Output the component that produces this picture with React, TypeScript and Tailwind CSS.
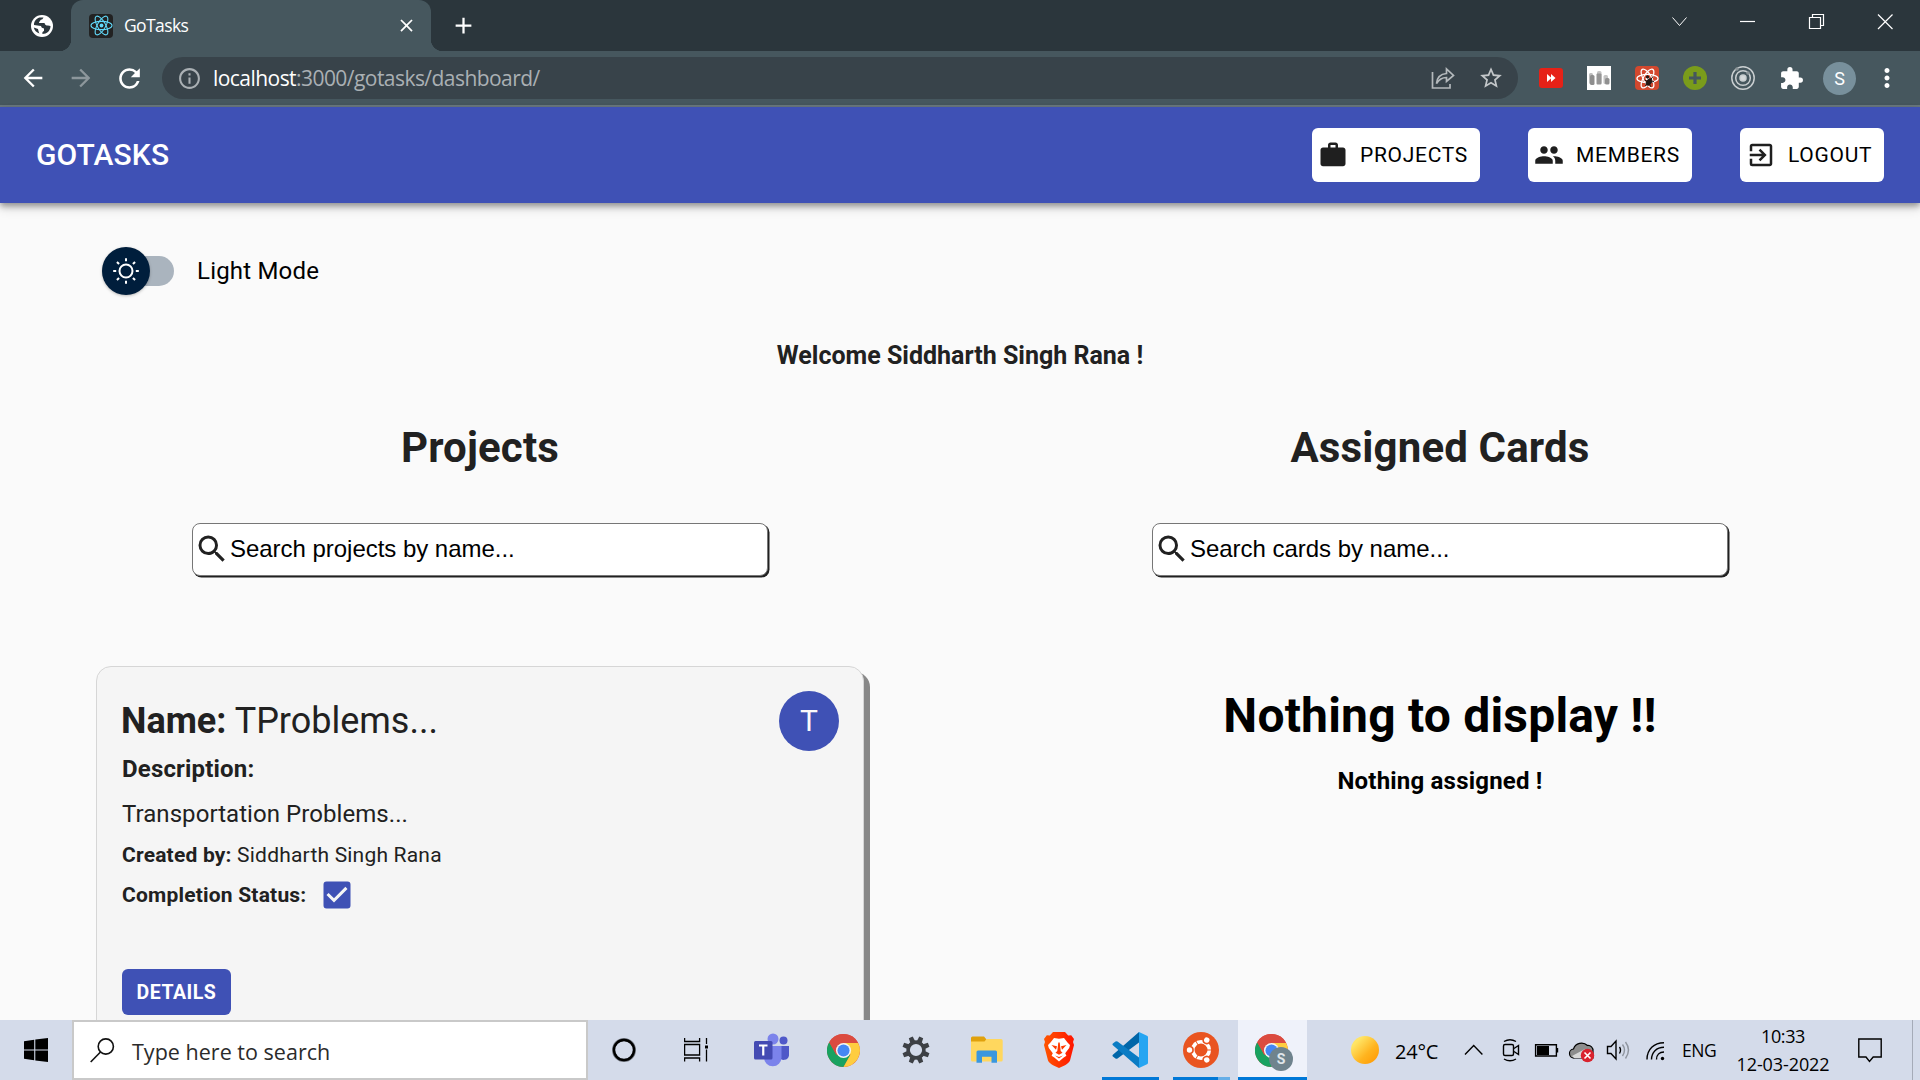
import React from "react";
import {
  MdWork,
  MdPeople,
  MdExitToApp,
  MdSearch,
  MdCheckBox,
  MdExtension,
  MdStarBorder,
  MdMoreVert,
  MdArrowBack,
  MdArrowForward,
  MdRefresh,
  MdInfoOutline,
  MdClose,
  MdAdd,
} from "react-icons/md";

const ui = "font-['Open_Sans',sans-serif]";

function Atom({ size, color, width = 1.3 }: { size: number; color: string; width?: number }) {
  return (
    <svg width={size} height={size} viewBox="-12 -12 24 24" fill="none" stroke={color} strokeWidth={width}>
      <ellipse rx="11" ry="4.3" />
      <ellipse rx="11" ry="4.3" transform="rotate(60)" />
      <ellipse rx="11" ry="4.3" transform="rotate(120)" />
      <circle r="2" fill={color} stroke="none" />
    </svg>
  );
}

function ChromeLogo({ size }: { size: number }) {
  return (
    <svg width={size} height={size} viewBox="0 0 48 48">
      <circle cx="24" cy="24" r="24" fill="#dd4f43" />
      <path d="M3.2 12 A24 24 0 0 0 24 48 L34.4 30 L13.6 30 Z" fill="#19a260" />
      <path d="M24 13 H45.3 A24 24 0 0 1 24 48 L34 30 Z" fill="#fecd40" />
      <path d="M3.2 12 L13.6 30 L24 13 H45.3 A24 24 0 0 0 3.2 12Z" fill="#db4b40" />
      <circle cx="24" cy="24" r="11" fill="#f4f4f4" />
      <circle cx="24" cy="24" r="8.8" fill="#4587f3" />
    </svg>
  );
}

function TabStrip() {
  return (
    <div className="flex h-[51px] bg-[#2b363c] text-white">
      <div className="flex w-[71px] items-center pl-[31px]">
        <svg width="22" height="22" viewBox="0 0 22 22">
          <circle cx="11" cy="11" r="11" fill="#fff" />
          <path
            d="M12.500 2.500c-1 1.500-1 2-3 2.500-.5 1.500-1.500 1.500-1.500 3h5.500c.5 2 1.500 2.500 3.500 2.500l2.500.5c0 4-2.500 6.500-5 7.500l-3 .5c-.5-1.500 0-2.500 1.500-3v-2.500c-2-.5-2.500-1-3-2.500L3 10c-.3-3 2-6.500 5.500-7.500zM2.800 12.500l4.200 1.500c.5 1.500.5 3 1.500 4.500-3-1-5.200-3-5.700-6z"
            fill="#2b363c"
          />
        </svg>
      </div>
      <div className="relative flex w-[360px] items-center rounded-t-xl bg-[#46575e] pl-[18px]">
        <div className="absolute bottom-0 -left-3 h-3 w-3 bg-[radial-gradient(circle_at_0_0,transparent_12px,#46575e_12.5px)]" />
        <div className="absolute -right-3 bottom-0 h-3 w-3 bg-[radial-gradient(circle_at_100%_0,transparent_12px,#46575e_12.5px)]" />
        <div className="flex h-6 w-6 items-center justify-center rounded-sm bg-[#222]">
          <Atom size={23} color="#61dafb" width={1.1} />
        </div>
        <span className={`ml-[11px] flex-1 text-[17.5px] tracking-[-0.6px] ${ui}`}>GoTasks</span>
        <MdClose size={21} className="mr-[14px]" />
      </div>
      <div className="flex flex-1 items-center pl-[19px]">
        <MdAdd size={27} />
      </div>
      <svg width="260" height="51" viewBox="1660 0 260 51" fill="none" stroke="#fff" strokeWidth="1.2">
        <path d="M1672.5 17.5l7 8 7-8" strokeWidth="1" />
        <path d="M1740 21.5h15" />
        <path d="M1809.5 17.5h11v11h-11zM1812.5 17v-2.5h11v11h-2.5" />
        <path d="M1878 14.5l14.5 14.5M1892.5 14.5l-14.5 14.5" />
      </svg>
    </div>
  );
}

function Toolbar() {
  return (
    <div className="flex h-14 items-center border-b-2 border-[#6a787e] bg-[#46575e] text-white">
      <div className="flex w-[162px] items-center pl-[19px]">
        <MdArrowBack size={28} />
        <MdArrowForward size={28} className="ml-5 text-[#8d979c]" />
        <MdRefresh size={31} className="ml-[19px]" />
      </div>
      <div className="flex h-[42px] w-[1356px] items-center rounded-full bg-[#38434a] pl-[15px] text-[#aab0b4]">
        <MdInfoOutline size={25} />
        <span className={`ml-[11px] flex-1 pt-px text-[21px] tracking-[-0.55px] whitespace-nowrap ${ui}`}>
          <span className="text-white">localhost</span>:3000/gotasks/dashboard/
        </span>
        <svg width="24" height="24" viewBox="0 0 24 24" fill="none" stroke="#b4b9bc" strokeWidth="1.7">
          <path d="M1.5 6v16h17.5v-4" />
          <path d="M5.500 17.500c.5-6 3.500-9.500 10-10V3l7 6.500-7 6v-4c-5 0-7.500 2-10 6Z" />
        </svg>
        <MdStarBorder size={26} className="mr-[14px] ml-[23px] text-[#c3c7c9]" />
      </div>
      <div className="flex flex-1 items-center pl-[21px]">
        <svg width="24" height="20" viewBox="0 0 24 20">
          <rect width="24" height="20" rx="3" fill="#e62117" />
          <path d="M8 6l4.500 4L8 14zM12 6l4.500 4-4.500 4z" fill="#fff" />
        </svg>
        <svg className="ml-6" width="24" height="24" viewBox="0 0 24 24">
          <rect width="24" height="24" fill="#fff" />
          <rect x="2" y="7" width="4" height="11" rx="1.5" fill="#bdbdbd" />
          <rect x="3" y="9" width="4.5" height="10" rx="1.5" fill="#8e8e8e" />
          <rect x="10" y="5" width="4.5" height="13" rx="1.5" fill="#c4c4c4" />
          <rect x="9.5" y="7.5" width="5" height="11" rx="1" fill="#969696" />
          <rect x="16.5" y="9" width="4.5" height="9" rx="1.5" fill="#c4c4c4" />
          <rect x="18" y="12" width="4.5" height="6.5" rx="1.5" fill="#909090" />
        </svg>
        <div className="relative ml-6 flex h-6 w-6 items-center justify-center rounded-sm bg-[#d3482e]">
          <Atom size={23} color="#fff" width={1.3} />
          <svg className="absolute inset-0" width="24" height="24" viewBox="0 0 24 24" stroke="#231815" fill="#231815" strokeWidth="1">
            <ellipse cx="14" cy="16" rx="2.2" ry="3.6" transform="rotate(35 14 16)" />
            <circle cx="12.5" cy="11" r="1.2" />
            <path d="M9.500 14l4 2M18 10.500l-3 4M10 20l4-3M19 15.500l-5 1M16 21l-2-4" />
          </svg>
        </div>
        <svg className="ml-6" width="24" height="24" viewBox="0 0 24 24">
          <circle cx="12" cy="12" r="12" fill="#7a9c1b" />
          <path d="M12 6v12M6 12h12" stroke="#45575d" strokeWidth="3.2" />
        </svg>
        <svg className="ml-6" width="24" height="24" viewBox="0 0 24 24" fill="none" stroke="#c9ced0" strokeWidth="1.5">
          <circle cx="12" cy="12" r="11.2" />
          <circle cx="12" cy="12" r="7.3" />
          <circle cx="12" cy="12" r="3" fill="#d5d9da" />
          <circle cx="6" cy="3" r="1.8" fill="#8a9397" stroke="none" />
          <circle cx="17" cy="7" r="1.8" fill="#8a9397" stroke="none" />
        </svg>
        <MdExtension size={25} className="ml-6" />
        <div className="ml-[19px] flex h-[33px] w-[33px] items-center justify-center rounded-full bg-[#78909c] font-[Roboto] text-[18px]">
          S
        </div>
        <MdMoreVert size={30} className="ml-4" />
      </div>
    </div>
  );
}

function NavButton({ icon, label, width }: { icon: React.ReactNode; label: string; width: string }) {
  return (
    <button className={`flex h-[54px] items-center gap-3 rounded-md bg-white pl-1.5 text-[21px] tracking-[0.7px] text-black ${width}`}>
      <span className="text-[#1f1f1f]">{icon}</span>
      <span className="pt-px">{label}</span>
    </button>
  );
}

function NavBar() {
  return (
    <div className="relative z-10 flex h-24 items-center justify-between bg-[#3f51b5] pr-9 pl-9 shadow-[0_3px_6px_rgba(0,0,0,0.35),0_6px_10px_rgba(0,0,0,0.12)]">
      <span className="pb-0.5 text-[30px] font-medium tracking-[0.1px] text-white">GOTASKS</span>
      <div className="flex gap-12">
        <NavButton icon={<MdWork size={30} />} label="PROJECTS" width="w-[168px]" />
        <NavButton icon={<MdPeople size={30} />} label="MEMBERS" width="w-[164px]" />
        <NavButton icon={<MdExitToApp size={30} />} label="LOGOUT" width="w-36" />
      </div>
    </div>
  );
}

function ModeSwitch() {
  return (
    <div className="flex h-[136px] items-center pl-[102px]">
      <div className="flex w-[72px] items-center">
        <div className="z-10 flex h-12 w-12 shrink-0 items-center justify-center rounded-full bg-[#001e3c] shadow-[0_1px_3px_rgba(0,0,0,0.25)]">
          <svg width="26" height="26" viewBox="-13 -13 26 26" fill="none" stroke="#fff" strokeWidth="2">
            <circle r="6.5" />
            {[0, 45, 90, 135, 180, 225, 270, 315].map((a) => (
              <path key={a} d="M9.800 0h3" transform={`rotate(${a})`} />
            ))}
          </svg>
        </div>
        <div className="-ml-12 h-[30px] w-[72px] shrink-0 rounded-full bg-[#aab4be]" />
      </div>
      <span className="ml-[23px] text-2xl tracking-[0.2px] text-black">Light Mode</span>
    </div>
  );
}

function SearchBox({ placeholder }: { placeholder: string }) {
  return (
    <div className="mx-auto flex h-[53px] w-[576px] items-center rounded-[8px] border border-[#767676] bg-white pb-0.5 pl-px shadow-[1.5px_1.5px_0_#212121]">
      <MdSearch size={36} className="shrink-0 text-[#212121]" />
      <span className="font-['Liberation_Sans',sans-serif] text-2xl tracking-[-0.03px] text-black">{placeholder}</span>
    </div>
  );
}

function ProjectCard() {
  return (
    <div className="ml-24 h-[480px] w-[768px] rounded-[15px] border border-[#d6d6d6] bg-[#f5f5f5] pt-6 pr-6 pl-[25px] shadow-[6px_6px_0_#888]">
      <div className="flex h-[60px] items-center justify-between">
        <div className="-ml-px text-4xl">
          <b>Name:</b> TProblems...
        </div>
        <div className="flex h-[60px] w-[60px] items-center justify-center rounded-full bg-[#3f51b5] text-3xl text-[#fafafa]">
          T
        </div>
      </div>
      <div className="h-[35px] text-2xl leading-[37px] font-bold tracking-[0.18px]">Description:</div>
      <div className="h-[55px] text-2xl leading-[57px] tracking-[0.06px]">Transportation Problems...</div>
      <div className="h-[27px] text-[21px] leading-[29px] tracking-[0.2px]">
        <b>Created by:</b> Siddharth Singh Rana
      </div>
      <div className="flex h-[53px] items-center text-[21px] font-bold tracking-[0.2px]">
        <span className="pt-0.5">Completion Status:</span>
        <MdCheckBox size={36} className="ml-[13px] text-[#3f51b5]" />
      </div>
      <button className="mt-12 flex h-[46px] w-[109px] items-center justify-center rounded-md bg-[#3f51b5] pt-0.5 text-[19.5px] font-bold tracking-[0.5px] text-white">
        DETAILS
      </button>
    </div>
  );
}

function Dashboard() {
  return (
    <div className="h-[817px] overflow-hidden bg-[#fafafa] text-[#212121]">
      <ModeSwitch />
      <div className="h-8 text-center text-[25px] leading-[34px] font-bold">Welcome Siddharth Singh Rana !</div>
      <div className="grid grid-cols-2">
        <div>
          <h2 className="h-[152px] text-center text-[42px] leading-[154px] font-bold tracking-[0.15px]">Projects</h2>
          <SearchBox placeholder="Search projects by name..." />
          <div className="h-[90px]" />
          <ProjectCard />
        </div>
        <div>
          <h2 className="h-[152px] text-center text-[42px] leading-[154px] font-bold tracking-[0.15px]">Assigned Cards</h2>
          <SearchBox placeholder="Search cards by name..." />
          <div className="h-[90px]" />
          <div className="h-[98px] text-center text-5xl leading-[100px] font-bold tracking-[0.2px] text-black">Nothing to display !!</div>
          <div className="h-[34px] text-center text-2xl leading-[34px] font-bold tracking-[0.2px] text-black">Nothing assigned !</div>
        </div>
      </div>
    </div>
  );
}

function TaskApp({ width, children, bar }: { width: string; children: React.ReactNode; bar?: React.ReactNode }) {
  return (
    <div className={`relative flex h-full items-center justify-center ${width}`}>
      {children}
      {bar}
    </div>
  );
}

function Taskbar() {
  return (
    <div className="flex h-[60px] items-stretch bg-[#d4dbea] text-black">
      <div className="flex w-[72px] items-center pl-6">
        <svg width="24" height="24" viewBox="0 0 24 24">
          <path d="M0 3.300L10.200 1.800V11.400H0zM11.300 1.600L24 0V11.400H11.300zM0 12.500H10.200V22.200L0 20.700zM11.300 12.500H24V24L11.300 22.400z" />
        </svg>
      </div>
      <div className="flex w-[516px] items-center border-2 border-[#c9c9c9] bg-white pl-4">
        <svg width="25" height="25" viewBox="0 0 25 25" fill="none" stroke="#111" strokeWidth="1.6">
          <circle cx="15.8" cy="8.5" r="7.6" />
          <path d="M10.500 14L.7 24" />
        </svg>
        <span className={`ml-[17px] pt-1 text-[21.5px] tracking-[0.02px] text-[#2b2b2b] ${ui}`}>Type here to search</span>
      </div>
      <TaskApp width="w-[72px]">
        <svg width="26" height="26" viewBox="0 0 26 26" fill="none">
          <circle cx="13" cy="13" r="10.500" stroke="#6f747d" strokeWidth="3" />
          <circle cx="13" cy="13" r="10" stroke="#000" strokeWidth="2.4" />
        </svg>
      </TaskApp>
      <TaskApp width="w-[71px]">
        <svg width="24" height="24" viewBox="0 0 24 24" fill="none" stroke="#000" strokeWidth="1.3">
          <path d="M.6 0v3.500h15V0M.6 6.500h15v10.500h-15zM.6 23.500V20h15v3.500M22.500 0v6M22.500 11.500v12" />
          <rect x="21" y="7.5" width="3" height="3" fill="#000" stroke="none" />
        </svg>
      </TaskApp>
      <TaskApp width="w-[81px]">
        <svg width="36" height="34" viewBox="0 0 36 34">
          <circle cx="29.5" cy="7.5" r="4" fill="#5059c9" />
          <path d="M25 13h10v9.500a5.200 5.200 0 0 1-10 1z" fill="#4f58c8" />
          <circle cx="19" cy="6" r="5.5" fill="#7b83eb" />
          <path d="M10 13h17.500v11.500a8.700 8.700 0 0 1-17.500 0z" fill="#7b83eb" />
          <rect x="0" y="8" width="18.5" height="18.5" rx="1.5" fill="#444bb3" />
          <path d="M5 12.500h8.500M9.250 12.500v10" stroke="#fff" strokeWidth="2.2" />
        </svg>
      </TaskApp>
      <TaskApp width="w-[63px]">
        <ChromeLogo size={33} />
      </TaskApp>
      <TaskApp width="w-[81px]">
        <svg width="28" height="28" viewBox="-14 -14 28 28" fill="none">
          {[22.5, 67.5, 112.5, 157.5, 202.5, 247.5, 292.5, 337.5].map((a) => (
            <path key={a} d="M8 -2.600L13.700 -2.100V2.100L8 2.600z" fill="#3d4045" transform={`rotate(${a})`} />
          ))}
          <circle r="7.9" stroke="#3d4045" strokeWidth="3.6" />
        </svg>
      </TaskApp>
      <TaskApp width="w-[62px]">
        <svg width="32" height="28" viewBox="0 0 32 28">
          <path d="M0 2a1.500 1.500 0 0 1 1.500-1.500H13l2.500 3V8H0z" fill="#e0a10d" />
          <path d="M0 5.500h13.500l2-2.500H30a1.700 1.700 0 0 1 1.700 1.700V24a1.500 1.500 0 0 1-1.500 1.500H1.500A1.500 1.500 0 0 1 0 24z" fill="#ffd75e" />
          <path d="M5.500 16a1.500 1.500 0 0 1 1.500-1.500h17.500A1.500 1.500 0 0 1 26 16v10.700h-5.500v-6h-9.500v6H5.500z" fill="#3a97df" />
        </svg>
      </TaskApp>
      <TaskApp width="w-[81px]">
        <svg width="32" height="36" viewBox="0 0 32 36">
          <defs>
            <linearGradient id="lion" x1="0" x2="1">
              <stop offset="0" stopColor="#ff5500" />
              <stop offset="1" stopColor="#ff1500" />
            </linearGradient>
          </defs>
          <path d="M10 0h12l3.200 3.500 3-.3L31 7l-1 3 1 3-4 15.500c-.5 1.700-3 3.500-5 4.800L16 36l-6-2.700c-2-1.300-4.500-3.100-5-4.800L1 13l1-3-1-3 2.800-3.800 3 .3z" fill="url(#lion)" />
          <path d="M11 6l5 .8 5-.8 3.500 4.500 2.500 2.500-.8 3-4 5.200 1.200 2.500-3 2L16 29.500l-4.400-3.800-3-2 1.200-2.500-4-5.200L5 13l2.500-2.500z" fill="#fff" />
          <path d="M8.500 13l5.500 1.200-1 3.500zM23.500 13L18 14.200l1 3.500zM15.300 10.500h1.400l1 8.500 1.800 1.700-3.500 2-3.500-2 1.800-1.700zM12 23.500l4 1.500 4-1.500-4 3z" fill="#ff3a00" />
        </svg>
      </TaskApp>
      <TaskApp width="w-[61px]" bar={<div className="absolute bottom-0 left-[3px] h-[3px] w-[57px] bg-[#0078d7]" />}>
        <svg width="36" height="36" viewBox="0 0 36 36">
          <path d="M1.200 24.800L3.500 26.500a1.700 1.700 0 0 0 2 0L27 10.500V0L.9 22.700a1.400 1.400 0 0 0 .3 2.100z" fill="#0066a9" />
          <path d="M1.200 11.200L3.500 9.500a1.700 1.700 0 0 1 2 0L27 25.500V36L.9 13.300a1.400 1.400 0 0 1 .3-2.100z" fill="#0a7cc4" />
          <path d="M27 0l8 3.800a1.700 1.700 0 0 1 1 1.600v25.200a1.700 1.700 0 0 1-1 1.600L27 36z" fill="#25a5f2" />
        </svg>
      </TaskApp>
      <TaskApp
        width="w-[78px]"
        bar={
          <div className="absolute bottom-0 left-[13px] flex h-[3px]">
            <div className="w-[45px] bg-[#0078d7]" />
            <div className="w-3 bg-[#66aee7]" />
          </div>
        }
      >
        <svg className="ml-[3px]" width="36" height="36" viewBox="-18 -18 36 36" fill="none">
          <circle r="18" fill="#e95420" />
          <circle r="8.3" stroke="#fff" strokeWidth="3.6" />
          {[60, 180, 300].map((a) => (
            <g key={a} transform={`rotate(${a})`}>
              <circle cx="11" r="3.9" fill="#e95420" />
              <circle cx="11.5" r="2.7" fill="#fff" />
            </g>
          ))}
          <path d="M5 0h6M-2.500 4.300l-3 5.200M-2.500-4.300l-3-5.200" stroke="#e95420" strokeWidth="1" />
        </svg>
      </TaskApp>
      <div className="relative flex w-[69px] items-center bg-[#eff2fa] pl-[17px]">
        <ChromeLogo size={33} />
        <div className="absolute top-[27px] left-[31px] flex h-6 w-6 items-center justify-center rounded-full bg-[#6f838d] font-[Roboto] text-[14px] font-bold text-[#dfe6ea]">
          S
        </div>
        <div className="absolute inset-x-0 bottom-0 h-[3px] bg-[#0078d7]" />
      </div>
      <div className="flex w-[138px] items-center pl-11">
        <div className="h-7 w-7 shrink-0 rounded-full bg-[linear-gradient(135deg,#ffe566_20%,#ffb41f_60%,#ff9500)]" />
        <span className={`mt-1 ml-4 text-[20px] tracking-[-0.2px] ${ui}`}>24°C</span>
      </div>
      <svg width="230" height="60" viewBox="1445 1020 230 60" fill="none" stroke="#000" strokeWidth="1.4">
        <path d="M1465 1054.500l8.700-9 8.700 9" />
        <rect x="1503.5" y="1044.5" width="10" height="11" rx="1.5" />
        <path d="M1514 1048.500l4.500-3v9l-4.500-3M1504 1041.500q6-3.500 12 0M1504 1059q6 3.500 12 0" />
        <path d="M1535.600 1044.700h20.800v11.300h-20.800zM1557.500 1048v4.500" />
        <rect x="1537" y="1046" width="12" height="9" fill="#000" stroke="none" />
        <path d="M1574.500 1058a4.500 4.500 0 0 1-1-9 8.500 8.500 0 0 1 14-3.500 5 5 0 0 1 5.500 5.500v7z" fill="#8d8d8d" strokeWidth="1.2" />
        <path d="M1572 1056l13-7 4 9h-15z" fill="#d8d8d8" stroke="none" />
        <circle cx="1587.5" cy="1055.5" r="6.7" fill="#d9232e" stroke="none" />
        <path d="M1584.500 1052.500l6 6M1590.500 1052.500l-6 6" stroke="#fff" strokeWidth="1.6" />
        <path d="M1607.500 1046.500h3.500l5-5.500v18l-5-5.500h-3.500z" />
        <path d="M1619.500 1047q2 3 0 6.500" />
        <path d="M1622.500 1044.500q4 5.500 0 11.500M1625.500 1042q6 8 0 16.500" stroke="#8f959f" />
        <path d="M1647 1059.500c0-10 7-16.800 17-16.800M1651.500 1059.500c0-7 5-12.300 12.500-12.300M1656.500 1059.500c0-4.500 3-7.500 7.500-7.500" />
        <circle cx="1662.5" cy="1058.5" r="1.7" fill="#000" stroke="none" />
      </svg>
      <div className={`flex w-[50px] items-center pl-[7px] text-[17.5px] tracking-[-0.5px] ${ui}`}>ENG</div>
      <div className={`flex w-[116px] flex-col items-center justify-center text-[18px] leading-[28px] tracking-[-0.1px] ${ui}`}>
        <span className="tracking-[-0.4px]">10:33</span>
        <span>12-03-2022</span>
      </div>
      <div className="flex w-[72px] items-center border-r border-[#a5abb8] pl-[17px]">
        <svg width="24" height="25" viewBox="0 0 24 25" fill="none" stroke="#000" strokeWidth="1.4">
          <path d="M.8 1h22.400v18h-8L11.500 23.500 8 19H.8z" />
        </svg>
      </div>
    </div>
  );
}

export default function App() {
  return (
    <div className="flex h-[1080px] w-[1920px] flex-col overflow-hidden font-[Roboto,sans-serif]">
      <TabStrip />
      <Toolbar />
      <NavBar />
      <Dashboard />
      <Taskbar />
    </div>
  );
}
